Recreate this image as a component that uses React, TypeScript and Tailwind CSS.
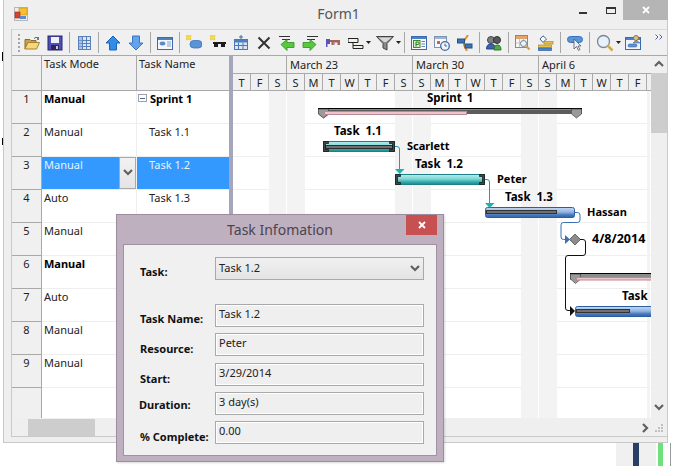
import React from 'react';

const days = ['T', 'F', 'S', 'S', 'M', 'T', 'W', 'T', 'F', 'S', 'S', 'M', 'T', 'W', 'T', 'F', 'S', 'S', 'M', 'T', 'W', 'T', 'F'];

const rows = [
  { n: 1, mode: 'Manual', name: 'Sprint 1', bold: true },
  { n: 2, mode: 'Manual', name: 'Task 1.1' },
  { n: 3, mode: 'Manual', name: 'Task 1.2', selected: true },
  { n: 4, mode: 'Auto', name: 'Task 1.3' },
  { n: 5, mode: 'Manual', name: '' },
  { n: 6, mode: 'Manual', name: '', bold: true },
  { n: 7, mode: 'Auto', name: '' },
  { n: 8, mode: 'Manual', name: '' },
  { n: 9, mode: 'Manual', name: '' },
];

function Icon({ children }: { children: React.ReactNode }) {
  return (
    <svg width="16" height="16" viewBox="0 0 16 16" className="block">
      {children}
    </svg>
  );
}

function Btn({ children }: { children: React.ReactNode }) {
  return <div className="w-[23px] h-full flex items-center justify-center shrink-0">{children}</div>;
}

function Sep() {
  return (
    <div className="w-[6px] h-full flex items-center justify-center shrink-0">
      <div className="w-px h-[21px] bg-[#a8a8a8]" />
    </div>
  );
}

function Caret() {
  return (
    <svg width="5" height="3" viewBox="0 0 5 3" className="block">
      <path d="M0 0h5L2.500 3z" fill="#222" />
    </svg>
  );
}

function Spark() {
  return <path d="M0 0h2v1h1V0h2v2H4v1h1v2H3V4H2v1H0V3h1V2H0z" fill="#f4dc58" stroke="#d8b52c" strokeWidth="0.3" />;
}

function Chevron({ dir }: { dir: 'up' | 'down' | 'right' }) {
  const d = dir === 'up' ? 'M1 6l4-4 4 4' : dir === 'down' ? 'M1 2l4 4 4-4' : 'M2 1l4 4-4 4';
  return (
    <svg width="10" height="10" viewBox="0 0 10 10" className="block">
      <path d={d} fill="none" stroke="#606060" strokeWidth="2.2" />
    </svg>
  );
}

function Toolbar() {
  return (
    <div className="h-[26px] flex items-center border-t border-[#d9d9d9] bg-[#f0f0f0]">
      <div className="w-[8px] h-full flex flex-col items-center justify-center gap-[2px] shrink-0 ml-[1px] mr-[-1px] pl-[4px]">
        {[0, 1, 2, 3, 4].map((i) => (
          <div key={i} className="w-[2px] h-[2px] bg-[#a5a5a5]" />
        ))}
      </div>
      <div className="w-[0.5px] shrink-0" />
      <Btn>
        <Icon>
          <path d="M1 4.500h5l1 1h5v2H4l-3 6z" fill="#caa24f" stroke="#8a6d2f" />
          <path d="M4 7.500h11.500l-3 6.500H.8z" fill="#f7d77c" stroke="#a5822f" />
          <path d="M10 3.500q2-2.500 4 0" fill="none" stroke="#667" />
          <path d="M13 2h2v3h-2z" fill="#778" />
        </Icon>
      </Btn>
      <Btn>
        <Icon>
          <rect x="1" y="1" width="14" height="14" fill="#5050b8" stroke="#24246c" />
          <rect x="4" y="2" width="8" height="6" fill="#eef0fa" />
          <rect x="4" y="10" width="8" height="5" fill="#2a2a55" />
          <rect x="9" y="11" width="2" height="3" fill="#c8c8e0" />
        </Icon>
      </Btn>
      <Sep />
      <Btn>
        <Icon>
          <rect x="2.500" y="1.500" width="12" height="13" fill="#dbe6f5" stroke="#5a80b8" />
          <path d="M6.500 1.500v13M10.500 1.500v13M2.500 5.500h12M2.500 8.500h12M2.500 11.500h12" stroke="#5a80b8" fill="none" />
          <rect x="3" y="2" width="3" height="12" fill="#86a8d8" opacity="0.6" />
        </Icon>
      </Btn>
      <Sep />
      <Btn>
        <Icon>
          <path d="M8 1l7 7h-3.500v7h-7V8H1z" fill="#2f8ce8" stroke="#2063b5" />
        </Icon>
      </Btn>
      <Btn>
        <Icon>
          <path d="M8 15l7-7h-3.500V1h-7v7H1z" fill="#67a3ea" stroke="#3a76c0" />
        </Icon>
      </Btn>
      <Sep />
      <Btn>
        <Icon>
          <rect x="0.500" y="2.500" width="15" height="12" fill="#f4f7fc" stroke="#3d6aa8" />
          <rect x="1" y="3" width="14" height="2" fill="#4a80c4" />
          <rect x="3" y="7" width="5" height="3" rx="1.500" fill="#5f90d0" stroke="#3d6aa8" strokeWidth="0.6" />
          <path d="M10 7h4M10 9h4M10 11h4" stroke="#88a0c0" />
        </Icon>
      </Btn>
      <Sep />
      <Btn>
        <Icon>
          <rect x="4" y="5.500" width="12" height="7.500" rx="3.700" fill="#5a94d8" stroke="#3a70b5" strokeWidth="0.8" />
          <Spark />
        </Icon>
      </Btn>
      <div className="w-[1px] shrink-0" />
      <Btn>
        <Icon>
          <Spark />
          <path d="M3 7h13v2h-1v3h-4V9H8v3H4V9H3z" fill="#1c1c1c" />
        </Icon>
      </Btn>
      <Btn>
        <Icon>
          <path d="M8 0v4M6 2h4" stroke="#4a6a9a" />
          <rect x="1.500" y="4.500" width="13" height="10" fill="#dbe6f5" stroke="#4a78b8" />
          <rect x="2" y="5" width="12" height="2.500" fill="#4a80c4" />
          <path d="M1.500 10.500h13M5.500 7.500v7M10 7.500v7" stroke="#4a78b8" fill="none" />
        </Icon>
      </Btn>
      <Btn>
        <Icon>
          <path d="M2.500 2.500l11 11M13.500 2.500l-11 11" stroke="#333" strokeWidth="2" />
        </Icon>
      </Btn>
      <Btn>
        <Icon>
          <path d="M0 1.500h11M3 4.500h8" stroke="#333" fill="none" />
          <path d="M1 11l6-5v3h7v5H7v3z" transform="translate(1 -1.500)" fill="#58c83c" stroke="#2f8f24" strokeWidth="0.8" />
        </Icon>
      </Btn>
      <Btn>
        <Icon>
          <path d="M5 1.500h11M5 4.500h8" stroke="#333" fill="none" />
          <path d="M14 11l-6-5v3H1v5h7v3z" fill="#58c83c" stroke="#2f8f24" strokeWidth="0.8" transform="translate(0 -1.500)" />
        </Icon>
      </Btn>
      <Btn>
        <Icon>
          <path d="M1 4h4v5H2.500v3H1z" fill="#5c55b8" />
          <path d="M5 5h10v5h-2.500V7.500H9V10H6.500V7H5z" fill="#a8605a" />
          <path d="M8 7.500h2v2H8z" fill="#9a9a9a" />
        </Icon>
      </Btn>
      <div className="w-[30px] h-full flex items-center gap-[2px] pl-[3px] shrink-0">
        <Icon>
          <path d="M0 3.500h10v4H0zM5 10.500h10v3H5z" fill="#f0f0e4" stroke="#222" />
          <path d="M5 7.500v3" stroke="#222" />
        </Icon>
        <Caret />
      </div>
      <div className="w-[27px] h-full flex items-center gap-[2px] shrink-0 pl-[1px]">
        <svg width="18" height="16" viewBox="0 0 18 16" className="block">
          <path d="M.5 1.500h17L11 8.500v6.500l-4-2V8.500z" fill="#8a8a8a" stroke="#444" />
          <path d="M2.500 2.500h13L10 7H8z" fill="#d8d8d8" />
        </svg>
        <Caret />
      </div>
      <Sep />
      <Btn>
        <Icon>
          <rect x="0.500" y="1.500" width="15" height="13" fill="#f6f9fd" stroke="#3d6aa8" />
          <rect x="1" y="2" width="14" height="2" fill="#4a80c4" />
          <rect x="2.500" y="5.500" width="6.500" height="7" fill="#d7ecc8" stroke="#3f8a2e" />
          <path d="M5 11.500v-4.500h1.800a1 1 0 0 1 0 2.500H5" fill="none" stroke="#2d7a20" />
          <path d="M10.500 6.500h3.500M10.500 9h3.500M10.500 11.500h3.500" stroke="#6a86ab" />
        </Icon>
      </Btn>
      <Btn>
        <Icon>
          <rect x="0.500" y="1.500" width="12" height="11" fill="#f6f9fd" stroke="#7e93ad" />
          <rect x="1" y="2" width="11" height="2" fill="#9eb4d0" />
          <rect x="3" y="6" width="3" height="3" fill="#e25a3a" />
          <circle cx="11" cy="11" r="4.300" fill="#f2f6fc" stroke="#3d6aa8" strokeWidth="1.300" />
          <path d="M11 8.500V11h2" stroke="#3d6aa8" fill="none" />
        </Icon>
      </Btn>
      <Btn>
        <Icon>
          <path d="M11 0L7 6v4l3 6" stroke="#f08c1c" strokeWidth="2" fill="none" />
          <rect x="0.500" y="4" width="7" height="4" fill="#3a74b8" stroke="#24527f" />
          <rect x="8" y="9" width="7" height="4" fill="#3a74b8" stroke="#24527f" />
        </Icon>
      </Btn>
      <Sep />
      <Btn>
        <Icon>
          <circle cx="5" cy="5" r="3.500" fill="#7a7f85" stroke="#44484d" />
          <circle cx="11" cy="5" r="3.500" fill="#55595e" stroke="#333" />
          <path d="M0.500 14q0-5 4.500-5t4.500 5z" fill="#3f62b0" stroke="#2c4585" />
          <path d="M8 15q0-5 3.500-5t3.500 5z" fill="#51a848" stroke="#2f7a2a" />
        </Icon>
      </Btn>
      <Sep />
      <Btn>
        <Icon>
          <rect x="0.500" y="0.500" width="12" height="12" fill="#f6f6f4" stroke="#8a8a8a" />
          <rect x="1" y="1" width="11" height="3" fill="#e2a468" />
          <path d="M4.500 4v8M8.500 4v8M1 8h11" stroke="#c4c4c4" />
          <circle cx="8.500" cy="8.500" r="3" fill="#eaf2fa" stroke="#6a7f98" />
          <path d="M11 11l3.500 3.500" stroke="#d89838" strokeWidth="2" />
        </Icon>
      </Btn>
      <Btn>
        <Icon>
          <path d="M5 0.800L8.500 4 5 7.500 2 4z" fill="#fdfdfd" stroke="#3f5f88" />
          <rect x="0.500" y="10" width="13" height="2.500" fill="#efc23e" stroke="#a98a20" strokeWidth="0.7" />
          <rect x="0.500" y="13" width="13" height="2.500" fill="#4a86cc" stroke="#2c5f9e" strokeWidth="0.7" />
          <rect x="6" y="6.500" width="9" height="2.500" fill="#efc23e" stroke="#a98a20" strokeWidth="0.7" />
        </Icon>
      </Btn>
      <Sep />
      <Btn>
        <Icon>
          <rect x="0.500" y="1.500" width="15" height="6" rx="3" fill="#5a94d8" stroke="#3a70b5" />
          <path d="M7 4v10l2.500-2.500 2 4 1.500-1-2-3.500h3z" fill="#eef2f6" stroke="#556" strokeWidth="0.8" />
        </Icon>
      </Btn>
      <Sep />
      <div className="w-[29px] h-full flex items-center gap-[2px] pl-[3px] shrink-0">
        <svg width="18" height="18" viewBox="0 0 18 18" className="block">
          <circle cx="7.500" cy="7.500" r="6" fill="#e8f1fa" stroke="#7b8794" strokeWidth="1.300" />
          <path d="M11.500 11.500l5 5" stroke="#d8a83a" strokeWidth="2.500" />
        </svg>
        <Caret />
      </div>
      <Btn>
        <Icon>
          <rect x="0.500" y="2.500" width="15" height="12" fill="#f0f5fb" stroke="#3d6aa8" />
          <rect x="1" y="3" width="14" height="2" fill="#4a80c4" />
          <rect x="3" y="9" width="9" height="3" rx="1.500" fill="#5f90d0" stroke="#3d6aa8" strokeWidth="0.6" />
          <circle cx="11" cy="3" r="2.500" fill="#dcc08a" stroke="#8a7440" />
          <path d="M8 8q3-4 7 0z" fill="#7fa0c8" stroke="#4d6a94" strokeWidth="0.6" />
        </Icon>
      </Btn>
      <div className="ml-auto mr-[4px] self-start mt-[4px]">
        <svg width="8" height="6" viewBox="0 0 8 6" className="block">
          <path d="M0.500 0.500l2.500 2.500-2.500 2.500M4.500 0.500l2.500 2.500-2.500 2.500" fill="none" stroke="#5660a8" />
        </svg>
      </div>
    </div>
  );
}

function GridRow({ row }: { row: (typeof rows)[number] }) {
  const weight = row.bold ? 'font-bold text-black' : 'text-[#222]';
  return (
    <div className="h-[33px] flex shrink-0">
      <div className="w-[30px] bg-[#f0f0f0] border-r border-b border-[#a9a9a9] flex justify-center text-[#222]">{row.n}</div>
      <div className={`w-[95px] flex border-r border-b border-[#eeeeee] ${row.selected ? 'bg-[#3399ff] border-r-[#f0f0f0]' : 'bg-white'}`}>
        <span className={`pl-[2px] flex-1 ${weight} ${row.selected ? 'text-[#e8f2fb]' : ''}`}>{row.mode}</span>
        {row.selected && (
          <div className="w-[17px] h-full border border-[#a9a9a9] bg-gradient-to-b from-[#f2f2f2] to-[#e4e4e4] flex items-center justify-center">
            <Chevron dir="down" />
          </div>
        )}
      </div>
      <div className={`w-[92px] flex border-b border-[#eeeeee] ${row.selected ? 'bg-[#3399ff]' : 'bg-white'}`}>
        {row.n === 1 && (
          <div className="w-[9px] h-[8px] mt-[3px] ml-[1px] border border-[#9aa0ad] flex items-center justify-center shrink-0">
            <div className="w-[5px] h-px bg-[#55648a]" />
          </div>
        )}
        <span className={`${row.n === 1 ? 'pl-[3px]' : 'pl-[12px]'} ${weight} ${row.selected ? 'text-[#e8f2fb]' : ''}`}>{row.name}</span>
      </div>
    </div>
  );
}

function GridPane() {
  return (
    <div className="w-[217px] flex flex-col shrink-0 bg-white">
      <div className="h-[36px] flex border-t border-b border-[#a9a9a9] bg-[#f0f0f0] shrink-0 text-[#222]">
        <div className="w-[30px] border-r border-[#a9a9a9]" />
        <div className="w-[95px] border-r border-[#a9a9a9] pl-[2px] leading-[16px]">Task Mode</div>
        <div className="w-[92px] pl-[2px] leading-[16px]">Task Name</div>
      </div>
      {rows.map((r) => (
        <GridRow key={r.n} row={r} />
      ))}
      <div className="flex-1 flex">
        <div className="w-[30px] bg-[#f0f0f0] border-r border-[#a9a9a9]" />
      </div>
    </div>
  );
}

function GanttDrawing() {
  return (
    <svg className="absolute left-0 top-0" width="418" height="327" viewBox="233 91 418 327">
      <defs>
        <linearGradient id="teal" x1="0" y1="0" x2="0" y2="1">
          <stop offset="0" stopColor="#b4eeee" />
          <stop offset="0.45" stopColor="#7fd6d6" />
          <stop offset="0.75" stopColor="#35a8a8" />
          <stop offset="1" stopColor="#168a8a" />
        </linearGradient>
        <linearGradient id="blue" x1="0" y1="0" x2="0" y2="1">
          <stop offset="0" stopColor="#c5d8f2" />
          <stop offset="0.45" stopColor="#93b4e4" />
          <stop offset="0.75" stopColor="#4678bd" />
          <stop offset="1" stopColor="#2f62a8" />
        </linearGradient>
      </defs>

      {/* Sprint 1 summary */}
      <path d="M318 108.500H582V114H577L576 114L571 114H329V114.500L323.500 118.500L318 114Z" fill="#8c8c8c" />
      <path d="M318 108.500H582" stroke="#000" fill="none" />
      <path d="M318.500 109v5l5 4 5-4v-5z" fill="#9a9a9a" stroke="#333" strokeWidth="0.6" />
      <path d="M571.500 109v5l5 4 5-4v-5z" fill="#9a9a9a" stroke="#333" strokeWidth="0.6" />
      <rect x="329" y="110" width="243" height="4" fill="#5c5c5c" />
      <rect x="324.500" y="111.500" width="142" height="3" fill="#f0c4cc" stroke="#b88a96" />

      {/* Task 1.1 */}
      <rect x="323.500" y="141.500" width="71" height="10" fill="url(#teal)" stroke="#1e8088" />
      <rect x="325.500" y="145.500" width="67" height="3" fill="#707070" stroke="#2c2c2c" />
      <path d="M323.500 141.500h5v2h-3v6h3v2h-5z" fill="#444" stroke="#111" strokeWidth="0.7" />
      <path d="M394.500 141.500h-5v2h3v6h-3v2h5z" fill="#444" stroke="#111" strokeWidth="0.7" />

      {/* Task 1.2 */}
      <rect x="395.500" y="174.500" width="89" height="10" fill="url(#teal)" stroke="#1e8088" />
      <path d="M395.500 174.500h5v2h-3v6h3v2h-5z" fill="#444" stroke="#111" strokeWidth="0.7" />
      <path d="M484.500 174.500h-5v2h3v6h-3v2h5z" fill="#444" stroke="#111" strokeWidth="0.7" />

      {/* Task 1.3 */}
      <rect x="485.500" y="207.500" width="89" height="10" rx="2" fill="url(#blue)" stroke="#2d5e9e" />
      <rect x="486.500" y="210.500" width="70" height="3" fill="#707070" stroke="#333" />

      {/* Lower summary and task */}
      <path d="M570 273.500H651" stroke="#000" fill="none" />
      <rect x="570" y="274" width="81" height="6" fill="#8c8c8c" />
      <path d="M570.500 274v5l5 4.500 5-4.500v-5z" fill="#9a9a9a" stroke="#333" strokeWidth="0.6" />
      <rect x="576.500" y="277.500" width="80" height="2.500" fill="#f0c4cc" stroke="#b88a96" />
      <rect x="575.500" y="306.500" width="90" height="10" rx="2" fill="url(#blue)" stroke="#2d5e9e" />
      <rect x="576.500" y="309.500" width="53" height="3" fill="#707070" stroke="#333" />

      {/* Links */}
      <path d="M395 146.500h2q2.500 0 2.500 2.500V170" fill="none" stroke="#2a9aa5" />
      <path d="M395 169h9.500l-4.750 5z" fill="#1fb0b0" />
      <path d="M485 179.500h2q2.500 0 2.500 2.500V204" fill="none" stroke="#2a9aa5" />
      <path d="M485 203h9.500l-4.750 5z" fill="#1fb0b0" />
      <path d="M575 212.500h2.500q2.500 0 2.500 2.500v5q0 2.500-2.500 2.500h-14q-2.500 0-2.500 2.500v12q0 2.500 2.500 2.500h2" fill="none" stroke="#3a6fb5" />
      <path d="M565 235l5 4.500-5 4.500z" fill="#3a6fb5" />
      <path d="M575 234l5.500 5.500-5.500 5.500-5.500-5.500z" fill="#8c8c8c" stroke="#444" strokeWidth="0.7" />
      <path d="M580 239.500h3q2.500 0 2.500 2.500v11q0 2.500-2.500 2.500h-15q-2.500 0-2.500 2.500v50q0 2.500 2.500 2.500h3" fill="none" stroke="#111" />
      <path d="M570 306l5 5-5 5z" fill="#111" />
    </svg>
  );
}

function Label({ className, children }: { className: string; children: React.ReactNode }) {
  return <span className={`absolute font-bold leading-[16px] text-black whitespace-nowrap ${className}`}>{children}</span>;
}

function GanttPane() {
  return (
    <div className="w-[418px] flex flex-col shrink-0 bg-white overflow-hidden">
      <div className="h-[36px] flex flex-col border-t border-b border-[#a9a9a9] bg-[#f0f0f0] shrink-0 text-[#222]">
        <div className="h-[18px] flex border-b border-[#a9a9a9]">
          <div className="w-[54px] border-r border-[#a9a9a9]" />
          <div className="w-[126px] border-r border-[#a9a9a9] pl-[3px] leading-[17px]">March 23</div>
          <div className="w-[126px] border-r border-[#a9a9a9] pl-[3px] leading-[17px]">March 30</div>
          <div className="flex-1 pl-[3px] leading-[17px]">April 6</div>
        </div>
        <div className="flex-1 flex">
          {days.map((d, i) => (
            <div key={i} className="w-[18px] border-r border-[#a9a9a9] flex items-center justify-center leading-none shrink-0">
              {d}
            </div>
          ))}
        </div>
      </div>
      <div className="relative flex-1">
        <div className="absolute inset-0 flex flex-col">
          {rows.map((r) => (
            <div key={r.n} className="h-[33px] border-b border-[#eeeeee] shrink-0" />
          ))}
        </div>
        <div className="absolute inset-0 flex">
          {days.map((d, i) => (
            <div key={i} className={`w-[18px] shrink-0 ${d === 'S' ? 'bg-[#f3f3f3]' : ''} ${d === 'S' && days[i + 1] === 'S' ? 'border-r border-white' : ''}`} />
          ))}
          <div className="w-[3px] bg-[#f3f3f3] shrink-0" />
        </div>
        <GanttDrawing />
        <Label className="left-[194px] top-[-1px] text-[11.5px] [word-spacing:2px]">Sprint 1</Label>
        <Label className="left-[101px] top-[32px] text-[11.5px] [word-spacing:3px]">Task 1.1</Label>
        <Label className="left-[174px] top-[47px] text-[11px]">Scarlett</Label>
        <Label className="left-[182px] top-[65px] text-[11.5px] [word-spacing:3px]">Task 1.2</Label>
        <Label className="left-[264px] top-[80px] text-[11px]">Peter</Label>
        <Label className="left-[272px] top-[98px] text-[11.5px] [word-spacing:3px]">Task 1.3</Label>
        <Label className="left-[354px] top-[113px] text-[11px]">Hassan</Label>
        <Label className="left-[359px] top-[140px] text-[12.5px]">4/8/2014</Label>
        <Label className="left-[389px] top-[197px] text-[11.5px]">Task</Label>
      </div>
    </div>
  );
}

function VScroll() {
  return (
    <div className="w-[16px] flex flex-col items-stretch bg-[#efefef] border-t border-[#a9a9a9] shrink-0">
      <div className="h-[17px] flex items-center justify-center shrink-0">
        <Chevron dir="up" />
      </div>
      <div className="h-[60px] bg-[#cdcdcd] shrink-0" />
      <div className="flex-1" />
      <div className="h-[17px] flex items-center justify-center shrink-0 pb-[3px]">
        <Chevron dir="down" />
      </div>
    </div>
  );
}

function Field({ label, value, labelClass, gapClass }: { label: string; value: string; labelClass: string; gapClass: string }) {
  return (
    <div className={`flex h-[23px] shrink-0 ${gapClass}`}>
      <div className={`w-[75px] font-bold leading-[16px] text-[#111] whitespace-nowrap ${labelClass}`}>{label}</div>
      <div className="w-[209px] h-[23px] border border-[#a9a9a9] outline outline-white -outline-offset-2 bg-[#efefef] text-[#222] pl-[3px] leading-[18px]">{value}</div>
    </div>
  );
}

function TaskDialog() {
  return (
    <div className="absolute left-[116px] top-[214px] w-[328px] h-[248px] bg-[#bfb0c0] border border-[#9b8d9e] flex flex-col shadow-[1px_1px_2px_rgba(0,0,0,0.15)]">
      <div className="h-[29px] relative flex items-center justify-center shrink-0 text-[14px] text-[#4a4450]">
        Task Infomation
        <div className="absolute right-[6px] top-0 w-[31px] h-[20px] bg-[#c75050] flex items-center justify-center">
          <svg width="8" height="8" viewBox="0 0 8 8" className="block">
            <path d="M1 1l6 6M7 1l-6 6" stroke="#fff" strokeWidth="1.800" />
          </svg>
        </div>
      </div>
      <div className="mx-[6px] h-[212px] bg-[#f0f0f0] border border-[#a090a2] pl-[16px] pt-[12px] flex flex-col">
        <div className="flex h-[23px] shrink-0">
          <div className="w-[75px] font-bold leading-[16px] text-[#111] pt-[7px]">Task:</div>
          <div className="w-[209px] h-[23px] border border-[#a9a9a9] bg-gradient-to-b from-[#f0f0f0] to-[#e4e4e4] text-[#222] pl-[3px] flex justify-between items-center pr-[3px]">
            <span className="leading-[16px] pb-[2px]">Task 1.2</span>
            <Chevron dir="down" />
          </div>
        </div>
        <Field label="Task Name:" value="Task 1.2" labelClass="pt-[7px]" gapClass="mt-[24px]" />
        <Field label="Resource:" value="Peter" labelClass="pt-[8px]" gapClass="mt-[6px]" />
        <Field label="Start:" value="3/29/2014" labelClass="pt-[8px]" gapClass="mt-[7px]" />
        <Field label="Duration:" value="3 day(s)" labelClass="pt-[5px] ml-[-1px] mr-[1px]" gapClass="mt-[6px]" />
        <Field label="% Complete:" value="0.00" labelClass="pt-[8px]" gapClass="mt-[6px]" />
      </div>
    </div>
  );
}

export default function App() {
  return (
    <div className="relative w-[674px] h-[466px] bg-white overflow-hidden font-['Noto_Sans',sans-serif] text-[11px] leading-[16px]">
      <div className="ml-[3px] w-[665px] h-[443px] bg-[#efefef] border-l border-r border-b border-[#c9c9c9] flex flex-col">
        <div className="h-[29px] grid grid-cols-[1fr_auto_1fr] shrink-0">
          <div className="pl-[10px] pt-[7px]">
            <svg width="14" height="14" viewBox="0 0 14 14" className="block">
              <rect x="0.500" y="0.500" width="13" height="13" fill="#ececec" stroke="#b8b8b8" />
              <rect x="5" y="1" width="8" height="7" fill="#f6c02e" stroke="#c98a1c" strokeWidth="0.6" />
              <rect x="1" y="5" width="5" height="6" fill="#d64232" stroke="#992a1f" strokeWidth="0.6" />
              <rect x="6" y="9" width="6" height="3" fill="#5a8ad8" />
            </svg>
          </div>
          <div className="text-[14px] leading-[28px] text-[#555] pl-[6px]">Form1</div>
          <div className="flex justify-end h-[20px]">
            <div className="w-[8px] h-[2px] bg-[#333] mt-[12px] mr-[19px]" />
            <div className="w-[10px] h-[7px] border border-[#333] border-t-2 mt-[7px] mr-[7px]" />
            <div className="w-[45px] mr-[-1px] h-[20px] bg-[#b5b5b5] flex items-center justify-center">
              <svg width="8" height="8" viewBox="0 0 8 8" className="block">
                <path d="M1 1l6 6M7 1l-6 6" stroke="#fff" strokeWidth="1.800" />
              </svg>
            </div>
          </div>
        </div>
        <div className="ml-[7px] flex-1 flex flex-col border-l border-[#c9c9c9] mb-[5px] border-b">
          <Toolbar />
          <div className="h-[363px] flex shrink-0">
            <GridPane />
            <div className="w-[4px] bg-[#a6a5be] shrink-0" />
            <GanttPane />
            <VScroll />
          </div>
          <div className="flex-1 flex items-center bg-[#efefef]">
            <div className="w-[16px]" />
            <div className="w-[67px] h-[17px] bg-[#cdcdcd]" />
            <div className="ml-auto mr-[4px] mt-[1px]">
              <Chevron dir="right" />
            </div>
            <svg width="9" height="9" viewBox="0 0 9 9" className="block mr-[3px] mt-[3px]">
              <path d="M6 0h2v2H6zM3 3h2v2H3zM6 3h2v2H6zM0 6h2v2H0zM3 6h2v2H3zM6 6h2v2H6z" fill="#c0c0c0" />
            </svg>
          </div>
        </div>
      </div>
      <div className="h-[23px] flex">
        <div className="ml-[616px] w-[17px] bg-[#f0f0f0]" />
        <div className="w-[6px] bg-[#2a3f66]" />
        <div className="w-[17px] bg-[#f0f0f0]" />
        <div className="w-[2px]" />
        <div className="w-[5px] bg-[#6fe07c]" />
        <div className="w-[7px]" />
        <div className="w-px bg-[#999]" />
      </div>
      <div className="absolute left-[2px] top-[52px] w-px h-[9px] bg-black" />
      <div className="absolute left-[2px] top-[138px] w-px h-[7px] bg-black" />
      <TaskDialog />
    </div>
  );
}
